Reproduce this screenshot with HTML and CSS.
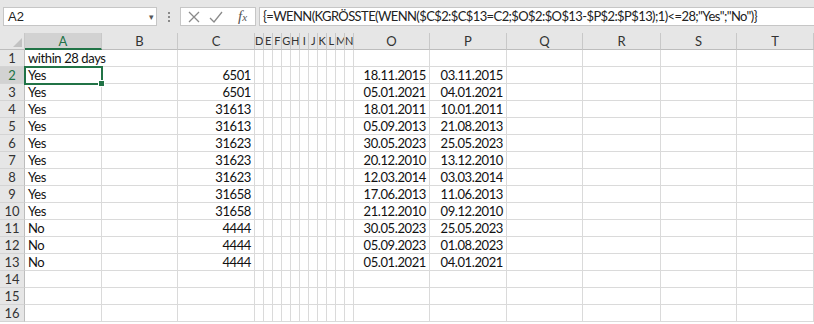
FILE: index.html
```html
<!DOCTYPE html>
<html lang="de">
<head>
    <meta charset="UTF-8">
    <title>Mappe1 - Excel</title>
    <link rel="stylesheet" href="styles.css">
</head>
<body>
<div id="app">
    <div class="fbar">
        <div class="namebox">
            <span class="ref">A2</span>
            <span class="caret">&#9662;</span>
        </div>
        <div class="grip">
            <i></i><i></i><i></i>
        </div>
        <div class="fbtns">
            <svg class="ico" width="16" height="16" viewBox="0 0 16 16">
                <path d="M3 3 L13 13 M13 3 L3 13" stroke="#8a8a8a" stroke-width="1.3" fill="none"/>
            </svg>
            <svg class="ico" width="16" height="16" viewBox="0 0 16 16">
                <path d="M2 9 L6 13 L14 3" stroke="#8a8a8a" stroke-width="1.3" fill="none"/>
            </svg>
            <span class="fx"><i>f</i><i class="x">x</i></span>
        </div>
        <div class="formula">{=WENN(KGRÖSSTE(WENN($C$2:$C$13=C2;$O$2:$O$13-$P$2:$P$13);1)&lt;=28;"Yes";"No")}</div>
    </div>

    <div class="sheet" id="sheet"></div>
</div>
<script>
    var cols=["A","B","C","D","E","F","G","H","I","J","K","L","M","N","O","P","Q","R","S","T"];
    var rows=[
        ["within 28 days","","","",""],
        ["Yes","6501","18.11.2015","03.11.2015"],
        ["Yes","6501","05.01.2021","04.01.2021"],
        ["Yes","31613","18.01.2011","10.01.2011"],
        ["Yes","31613","05.09.2013","21.08.2013"],
        ["Yes","31623","30.05.2023","25.05.2023"],
        ["Yes","31623","20.12.2010","13.12.2010"],
        ["Yes","31623","12.03.2014","03.03.2014"],
        ["Yes","31658","17.06.2013","11.06.2013"],
        ["Yes","31658","21.12.2010","09.12.2010"],
        ["No","4444","30.05.2023","25.05.2023"],
        ["No","4444","05.09.2023","01.08.2023"],
        ["No","4444","05.01.2021","04.01.2021"],
        ["","","",""],
        ["","","",""],
        ["","","",""]
    ];
    var oSheet=document.getElementById("sheet");
    var html='<div class="corner"><span class="tri"></span></div>';
    for(var i=0;i<cols.length;i++){
        var hc="ch";
        if(cols[i]=="A"){hc+=" sel";}
        if(i>=3&&i<=13){hc+=" thin";}
        html+='<div class="'+hc+'">'+cols[i]+'</div>';
    }
    for(var r=0;r<rows.length;r++){
        var d=rows[r];
        html+='<div class="rh'+(r==1?" sel":"")+'">'+(r+1)+'</div>';
        for(var c=0;c<cols.length;c++){
            var txt="",cls="cell";
            if(c==0){txt=d[0];}
            if(c==2){txt=d[1]||"";cls+=" num";}
            if(c==14){txt=d[2]||"";cls+=" num";}
            if(c==15){txt=d[3]||"";cls+=" num";}
            if(r==0&&c==0){cls+=" over";}
            if(r==1&&c==0){cls+=" active";}
            html+='<div class="'+cls+'">'+txt+'</div>';
        }
    }
    oSheet.innerHTML=html;
</script>
</body>
</html>
```

FILE: styles.css
```css
body{
    margin: 0;
    background: #fff;
    font-family: "Lato", "Liberation Sans", sans-serif;
    overflow: hidden;
}
#app{
    width: 814px;
    height: 324px;
    overflow: hidden;
}
.fbar{
    height: 33px;
    background: #e6e6e6;
    display: flex;
    align-items: flex-start;
    padding-top: 7px;
    box-sizing: border-box;
}
.namebox{
    margin-left: 3px;
    width: 154px;
    height: 19px;
    background: #fff;
    border: 1px solid #c6c6c6;
    box-sizing: border-box;
    display: flex;
    align-items: center;
    justify-content: space-between;
    padding: 0 2px 0 4px;
    font-family: "Liberation Sans", sans-serif;
    font-size: 13px;
    color: #222;
}
.caret{
    font-size: 9px;
    color: #555;
}
.grip{
    width: 23px;
    height: 19px;
    display: flex;
    flex-direction: column;
    align-items: center;
    justify-content: center;
    gap: 2px;
}
.grip i{
    width: 2px;
    height: 2px;
    background: #8a8a8a;
}
.fbtns{
    width: 76px;
    height: 19px;
    background: #fff;
    border: 1px solid #c6c6c6;
    box-sizing: border-box;
    display: flex;
    align-items: center;
    padding-left: 5px;
    gap: 6px;
}
.fx{
    margin-left: 8px;
    font-family: "Liberation Serif", serif;
    font-size: 15px;
    color: #555;
    line-height: 16px;
}
.fx .x{
    font-size: 11px;
}
.formula{
    margin-left: 3px;
    flex: 1;
    height: 19px;
    background: #fff;
    border: 1px solid #c6c6c6;
    border-right: none;
    box-sizing: border-box;
    padding-left: 3px;
    font-family: "Lato", sans-serif;
    font-size: 13px;
    letter-spacing: -0.6px;
    line-height: 17px;
    color: #222;
    white-space: nowrap;
}
.sheet{
    display: grid;
    grid-template-columns: 25px 77px 76px 77px repeat(11, 9px) 76px 77px 76px 78px 76px 77px;
    grid-auto-rows: 17px;
    font-size: 13px;
    letter-spacing: -0.4px;
    color: #111;
}
.corner{
    background: #e6e6e6;
    border-right: 1px solid #c8c8c8;
    border-bottom: 1px solid #bdbdbd;
    box-sizing: border-box;
    position: relative;
}
.tri{
    position: absolute;
    right: 2px;
    bottom: 2px;
    width: 0;
    height: 0;
    border-left: 9px solid transparent;
    border-bottom: 9px solid #c2c2c2;
}
.ch{
    background: #e6e6e6;
    border-right: 1px solid #c8c8c8;
    border-bottom: 1px solid #bdbdbd;
    box-sizing: border-box;
    text-align: center;
    line-height: 16px;
    color: #333;
    font-size: 13px;
    letter-spacing: 0;
    overflow: hidden;
}
.ch.thin{
    font-size: 11px;
    letter-spacing: -0.5px;
}
.ch.sel{
    background: #d2d2d2;
    color: #217346;
    border-bottom: 2px solid #217346;
}
.rh{
    background: #e6e6e6;
    border-right: 1px solid #bdbdbd;
    border-bottom: 1px solid #d4d4d4;
    box-sizing: border-box;
    text-align: center;
    line-height: 16px;
    color: #333;
    letter-spacing: 0;
}
.rh.sel{
    background: #d2d2d2;
    color: #217346;
}
.cell{
    border-right: 1px solid #dadada;
    border-bottom: 1px solid #dadada;
    box-sizing: border-box;
    padding: 0 3px;
    line-height: 16px;
    white-space: nowrap;
    overflow: hidden;
}
.cell.over{
    overflow: visible;
    border-right-color: transparent;
}
.cell.num{
    text-align: right;
}
.cell.active{
    position: relative;
    overflow: visible;
    outline: 2px solid #217346;
    outline-offset: -1px;
}
.cell.active::after{
    content: "";
    position: absolute;
    right: -4px;
    bottom: -4px;
    width: 5px;
    height: 5px;
    background: #217346;
    border: 1px solid #fff;
}
```
